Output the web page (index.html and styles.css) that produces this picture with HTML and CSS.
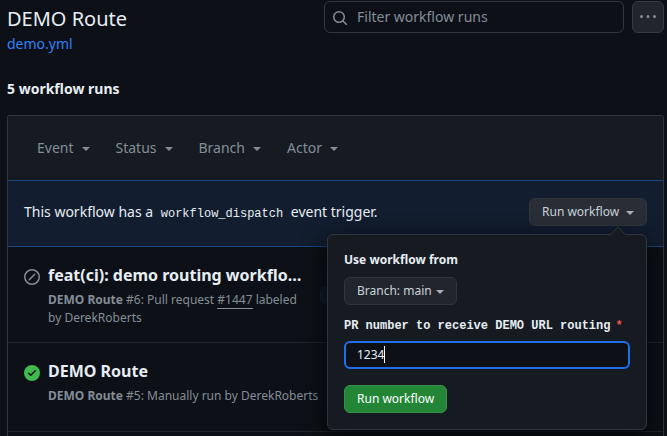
FILE: index.html
```html
<!DOCTYPE html>
<html lang="en">
<head>
<meta charset="utf-8">
<title>DEMO Route workflow runs</title>
<link rel="stylesheet" href="styles.css">
</head>
<body>
<header class="page-head">
  <div class="heading">
    <h1>DEMO Route</h1>
    <a class="file-link">demo.yml</a>
  </div>
  <div class="search">
    <svg width="16" height="16" viewBox="0 0 16 16" fill="currentColor"><path d="M10.68 11.74a6 6 0 0 1-7.922-8.982 6 6 0 0 1 8.982 7.922l3.04 3.04a.749.749 0 0 1-.326 1.275.749.749 0 0 1-.734-.215ZM11.5 7a4.499 4.499 0 1 0-8.997 0A4.499 4.499 0 0 0 11.5 7Z"/></svg>
    <span>Filter workflow runs</span>
  </div>
  <div class="more">
    <svg width="16" height="16" viewBox="0 0 16 16" fill="currentColor"><path d="M8 9a1.5 1.5 0 1 0 0-3 1.5 1.5 0 0 0 0 3ZM1.500 9a1.500 1.500 0 1 0 0-3 1.500 1.500 0 0 0 0 3Zm13 0a1.500 1.500 0 1 0 0-3 1.500 1.500 0 0 0 0 3Z"/></svg>
  </div>
</header>
<div class="count">5 workflow runs</div>
<main class="box">
  <div class="filters">
    <span>Event<i class="caret"></i></span>
    <span>Status<i class="caret"></i></span>
    <span>Branch<i class="caret"></i></span>
    <span>Actor<i class="caret"></i></span>
  </div>
  <div class="dispatch">
    <p>This workflow has a <code>workflow_dispatch</code> event trigger.</p>
    <div class="menu">
      <div class="btn btn-open">Run workflow<i class="caret"></i></div>
      <div class="popover">
        <svg class="pointer" width="16" height="9" viewBox="0 0 16 9"><path d="M0 9 8 1l8 8" fill="#161b22" stroke="#30363d"/></svg>
        <div class="label">Use workflow from</div>
        <div class="btn btn-branch">Branch: main<i class="caret"></i></div>
        <div class="label mono"><span>PR number to receive DEMO URL routing</span><span class="required">*</span></div>
        <div class="field"><span>1234</span><i class="cursor"></i></div>
        <div class="btn btn-primary">Run workflow</div>
      </div>
    </div>
  </div>
  <div class="run run-tall">
    <svg class="skipped" width="16" height="16" viewBox="0 0 16 16" fill="currentColor"><path d="M8 0a8 8 0 1 1 0 16A8 8 0 0 1 8 0ZM1.500 8a6.500 6.500 0 1 0 13 0 6.500 6.500 0 0 0-13 0Zm9.780-2.220-5.500 5.500a.749.749 0 0 1-1.275-.326.749.749 0 0 1 .215-.734l5.500-5.500a.751.751 0 0 1 1.042.018.751.751 0 0 1 .018 1.042Z"/></svg>
    <div class="run-text">
      <h2>feat(ci): demo routing workflo…</h2>
      <p><b>DEMO Route</b> #6: Pull request <span class="pr">#1447</span> labeled<br>by DerekRoberts</p>
    </div>
    <span class="branch"></span>
  </div>
  <div class="run">
    <svg class="success" width="16" height="16" viewBox="0 0 16 16" fill="currentColor"><path d="M8 16A8 8 0 1 1 8 0a8 8 0 0 1 0 16Zm3.780-9.720a.751.751 0 0 0-.018-1.042.751.751 0 0 0-1.042-.018L6.750 9.190 5.280 7.720a.751.751 0 0 0-1.042.018.751.751 0 0 0-.018 1.042l2 2a.75.75 0 0 0 1.060 0Z"/></svg>
    <div class="run-text">
      <h2>DEMO Route</h2>
      <p><b>DEMO Route</b> #5: Manually run by DerekRoberts</p>
    </div>
  </div>
</main>
</body>
</html>
```
FILE: styles.css
```css
* { box-sizing: border-box; }
body {
  margin: 0;
  height: 436px;
  overflow: hidden;
  background: #0d1117;
  color: #e6edf3;
  font: 14px/21px "Noto Sans", sans-serif;
}
h1, h2, p { margin: 0; }
svg { display: block; flex: none; }
.page-head {
  display: flex;
  align-items: flex-start;
  padding: 1px 3px 0 7px;
}
.heading { flex: 1; padding-top: 3px; }
h1 { font-size: 20px; line-height: 30px; font-weight: 400; }
.file-link { display: block; color: #2f81f7; line-height: 20px; }
.search {
  display: flex;
  align-items: center;
  gap: 9px;
  width: 300px;
  height: 32px;
  padding: 0 0 1px 7px;
  border: 1px solid #30363d;
  border-radius: 6px;
  color: #848d97;
}
.search svg { margin-top: 3px; }
.more {
  display: flex;
  align-items: center;
  justify-content: center;
  width: 32px;
  height: 32px;
  margin-left: 8px;
  border: 1px solid #363b42;
  border-radius: 6px;
  background: #21262d;
  color: #848d97;
}
.count { padding: 24px 7px 0; font-weight: 700; }
.box {
  margin: 16px 3px 0 7px;
  height: 321px;
  border: 1px solid #30363d;
  border-bottom: 0;
  border-radius: 3px 3px 0 0;
}
.filters {
  display: flex;
  gap: 26px;
  height: 64px;
  padding: 0 29px 2px;
  align-items: center;
  background: #161b22;
  border-radius: 2px 2px 0 0;
  color: #848d97;
}
.caret {
  display: inline-block;
  border: 4px solid transparent;
  border-top-color: currentColor;
  border-bottom: 0;
  vertical-align: middle;
}
.filters .caret { margin-left: 8px; }
.dispatch {
  display: flex;
  align-items: center;
  justify-content: space-between;
  height: 67px;
  padding: 0 16px 3px;
  border-top: 1px solid #1c4580;
  border-bottom: 1px solid #1c4580;
  background: #121d2f;
}
.dispatch p { padding-bottom: 2px; }
code { padding: 0 4px; font: 12px "Liberation Mono", monospace; }
.menu { position: relative; }
.btn {
  display: flex;
  align-items: center;
  width: fit-content;
  height: 28px;
  padding: 0 12px;
  border: 1px solid #30363d;
  border-radius: 6px;
  background: #21262d;
  color: #c9d1d9;
  font-size: 12px;
  line-height: 20px;
  white-space: nowrap;
}
.btn-open { width: 118px; background: #292e36; }
.btn-open .caret { margin-left: 7px; }
.btn-branch { width: 113px; }
.btn-branch .caret { margin-left: 4px; }
.btn .caret { flex: none; margin-top: 1px; opacity: .8; }
.popover {
  position: absolute;
  z-index: 2;
  top: 36px;
  right: 0;
  width: 320px;
  height: 196px;
  padding: 16px;
  border: 1px solid #30363d;
  border-radius: 6px;
  background: #161b22;
  box-shadow: 0 8px 24px #010409;
}
.pointer { position: absolute; top: -9px; right: 20px; }
.label { height: 26px; font-size: 12px; line-height: 18px; font-weight: 700; }
.mono {
  display: flex;
  gap: 5px;
  height: 24px;
  margin-top: 12px;
  font-family: "Liberation Mono", monospace;
  white-space: nowrap;
}
.required { color: #f85149; }
.field {
  display: flex;
  align-items: center;
  height: 28px;
  padding-left: 11px;
  border: 2px solid #1f6feb;
  border-radius: 6px;
  background: #0d1117;
  font-size: 12px;
}
.field span { padding-bottom: 2px; }
.cursor { width: 1px; height: 17px; margin-bottom: 1px; background: #fff; }
.btn-primary {
  margin-top: 16px;
  border-color: #38914a;
  background: #238636;
  color: #fff;
}
.run {
  display: flex;
  height: 89px;
  padding: 16px 16px 0;
  border-bottom: 1px solid #21262d;
}
.run-tall { height: 96px; }
.run svg { margin-top: 6px; }
.run-text { width: 275px; margin-left: 8px; white-space: nowrap; }
.skipped { color: #848d97; }
.success { color: #3fb950; }
h2 { font-size: 16px; line-height: 24px; font-weight: 700; }
.run p { margin-top: 4px; font-size: 12px; line-height: 18px; color: #848d97; }
.pr { border-bottom: 1px solid #848d97; }
.branch {
  width: 80px;
  height: 18px;
  margin: 23px 0 0 -3px;
  border-radius: 6px;
  background: #121d2f;
}
```
